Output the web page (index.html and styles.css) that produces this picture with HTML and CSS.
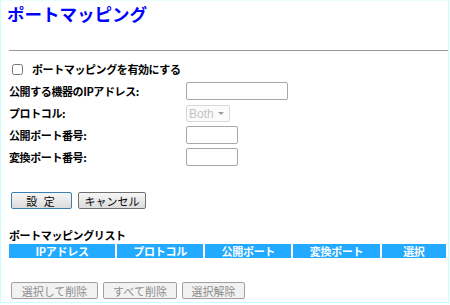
FILE: index.html
```html
<!DOCTYPE html>
<html lang="ja">

<head>
    <meta charset="UTF-8">
    <title>ポートマッピング</title>
    <link rel="stylesheet" href="styles.css">
</head>

<body>
    <div class="frame">
        <h1>ポートマッピング</h1>
        <hr>

        <div class="enable-row">
            <input type="checkbox" id="enable">
            <label for="enable">ポートマッピングを有効にする</label>
        </div>

        <div class="form-row">
            <label>公開する機器のIPアドレス:</label>
            <input type="text" class="wide">
        </div>
        <div class="form-row">
            <label>プロトコル:</label>
            <span class="select-wrap">
                <select disabled>
                    <option>Both</option>
                </select>
            </span>
        </div>
        <div class="form-row">
            <label>公開ポート番号:</label>
            <input type="text" class="short">
        </div>
        <div class="form-row">
            <label>変換ポート番号:</label>
            <input type="text" class="short">
        </div>

        <div class="actions">
            <button type="button" class="btn default set">設 定</button>
            <button type="button" class="btn cancel">キャンセル</button>
        </div>

        <div class="list-title">ポートマッピングリスト</div>
        <div class="list-head">
            <div class="col ip">IPアドレス</div>
            <div class="col">プロトコル</div>
            <div class="col">公開ポート</div>
            <div class="col">変換ポート</div>
            <div class="col sel">選択</div>
        </div>

        <div class="list-actions">
            <button type="button" class="btn del-sel" disabled>選択して削除</button>
            <button type="button" class="btn del-all" disabled>すべて削除</button>
            <button type="button" class="btn unsel" disabled>選択解除</button>
        </div>
    </div>
</body>

</html>
```

FILE: styles.css
```css
body {
    margin: 0;
    background: white;
    font-family: "Noto Sans CJK JP", "Liberation Sans", sans-serif;
    font-size: 11px;
    color: #000;
}

.frame {
    box-sizing: border-box;
    width: 449px;
    height: 303px;
    border: 1px solid #c8ffff;
    border-top-color: #e8ffff;
    padding: 0 0 0 8px;
}

h1 {
    margin: 0 0 0 -2px;
    padding: 2px 0 0 0;
    height: 26px;
    font-size: 17.5px;
    line-height: 22px;
    color: #0000ff;
}

hr {
    margin: 21px 0 0 0;
    border: none;
    border-top: 1px solid #999;
}

.enable-row {
    display: flex;
    align-items: center;
    height: 22px;
    margin-top: 7px;
}

.enable-row input {
    margin: 0 9px 0 3px;
    width: 11px;
    height: 11px;
}

.enable-row label,
.form-row label,
.list-title {
    font-weight: bold;
    letter-spacing: -0.4px;
}

.form-row {
    display: flex;
    align-items: center;
    height: 22px;
}

.form-row label {
    width: 177px;
}

.form-row input {
    box-sizing: border-box;
    height: 18px;
    border: 1px solid #a8a8a8;
    border-radius: 2px;
    padding: 0 2px;
}

.wide {
    width: 102px;
}

.short {
    width: 52px;
}

.select-wrap {
    position: relative;
    display: inline-block;
    height: 17px;
}

.select-wrap::after {
    content: "";
    position: absolute;
    right: 6px;
    top: 7px;
    border-left: 3px solid transparent;
    border-right: 3px solid transparent;
    border-top: 3px solid #999;
}

select {
    box-sizing: border-box;
    appearance: none;
    width: 44px;
    height: 17px;
    font-family: "Liberation Sans", sans-serif;
    font-size: 12px;
    color: #aaa;
    background: #fafafa;
    border: 1px solid #c8c8c8;
    border-radius: 2px;
    padding: 0 0 0 2px;
}

.actions {
    display: flex;
    gap: 6px;
    margin-top: 24px;
    padding-left: 2px;
}

.btn {
    box-sizing: border-box;
    height: 17px;
    padding: 0;
    font-family: "Noto Sans CJK JP", sans-serif;
    font-size: 11px;
    line-height: 14px;
    color: #000;
    background: linear-gradient(#f6f6f6, #dcdcdc);
    border: 1px solid #707070;
    border-radius: 2px;
}

.btn.default {
    border-color: #3c7fb1;
}

.set {
    width: 61px;
    letter-spacing: 2px;
}

.cancel {
    width: 68px;
}

.list-title {
    margin-top: 18px;
    height: 16px;
    line-height: 16px;
}

.list-head {
    display: flex;
    gap: 2px;
    width: 437px;
    margin-top: 1px;
}

.col {
    width: 87px;
    height: 14px;
    line-height: 14px;
    background: #21aaff;
    color: white;
    font-weight: bold;
    text-align: center;
    letter-spacing: -0.3px;
}

.col.ip {
    width: 107px;
}

.col.sel {
    width: 65px;
}

.list-actions {
    display: flex;
    gap: 5px;
    margin-top: 24px;
    padding-left: 2px;
}

.btn:disabled {
    color: #8c8c8c;
    background: #f2f2f2;
    border-color: #a0a0a0;
}

.del-sel {
    width: 87px;
}

.del-all {
    width: 74px;
}

.unsel {
    width: 63px;
}
```
